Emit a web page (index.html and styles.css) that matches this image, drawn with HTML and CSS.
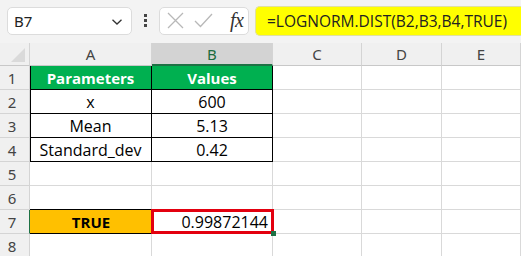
FILE: index.html
```html
<!DOCTYPE html>
<html>
<head>
<meta charset="utf-8">
<link rel="stylesheet" href="styles.css">
</head>
<body>
<div class="fbar">
  <div class="namebox">
    <span class="ref">B7</span>
    <svg class="chev" width="12" height="8" viewBox="0 0 12 8"><path d="M1.5 1.8 L6 6 L10.5 1.8" fill="none" stroke="#333" stroke-width="1.3"/></svg>
  </div>
  <div class="dots"><i></i><i></i><i></i></div>
  <div class="fxbox">
    <svg width="17" height="17" viewBox="0 0 17 17"><path d="M1 1 L16 16 M16 1 L1 16" stroke="#b8b8b8" stroke-width="1.3" fill="none"/></svg>
    <svg width="19" height="15" viewBox="0 0 19 15"><path d="M1 8 L6.5 13.5 L18 1" stroke="#b8b8b8" stroke-width="1.3" fill="none"/></svg>
    <span class="fx">fx</span>
  </div>
  <div class="formula">=LOGNORM.DIST(B2,B3,B4,TRUE)</div>
</div>
<div class="sheet">
  <div class="corner"><span class="tri"></span></div>
  <div class="ch">A</div>
  <div class="ch sel">B</div>
  <div class="ch">C</div>
  <div class="ch">D</div>
  <div class="ch">E</div>

  <div class="rh">1</div>
  <div class="c hd tl">Parameters</div>
  <div class="c hd tr">Values</div>
  <div class="c"></div><div class="c"></div><div class="c"></div>

  <div class="rh">2</div>
  <div class="c bl">x</div>
  <div class="c br">600</div>
  <div class="c"></div><div class="c"></div><div class="c"></div>

  <div class="rh">3</div>
  <div class="c bl">Mean</div>
  <div class="c br">5.13</div>
  <div class="c"></div><div class="c"></div><div class="c"></div>

  <div class="rh">4</div>
  <div class="c bl">Standard_dev</div>
  <div class="c br">0.42</div>
  <div class="c"></div><div class="c"></div><div class="c"></div>

  <div class="rh">5</div>
  <div class="c"></div><div class="c"></div><div class="c"></div><div class="c"></div><div class="c"></div>

  <div class="rh">6</div>
  <div class="c pre"></div><div class="c"></div><div class="c"></div><div class="c"></div><div class="c"></div>

  <div class="rh rsel">7</div>
  <div class="c orange">TRUE</div>
  <div class="c result">0.99872144<span class="fill"></span></div>
  <div class="c"></div><div class="c"></div><div class="c"></div>

  <div class="rh">8</div>
  <div class="c"></div><div class="c"></div><div class="c"></div><div class="c"></div><div class="c"></div>
</div>
</body>
</html>
```
FILE: styles.css
```css
* { box-sizing: border-box; }
html, body { margin: 0; padding: 0; }
body {
  width: 521px;
  height: 256px;
  overflow: hidden;
  background: #f3f3f3;
  font-family: "Open Sans", "Liberation Sans", sans-serif;
}
.fbar {
  height: 43px;
  display: flex;
  align-items: center;
  padding: 0 0 2px 7px;
  background: #f3f3f3;
}
.namebox {
  width: 125px;
  height: 28px;
  background: #fff;
  border: 1px solid #dcdcdc;
  border-radius: 5px;
  display: flex;
  align-items: center;
  justify-content: space-between;
  padding: 0 8px 0 6px;
  font-size: 15px;
  color: #222;
  font-family: "Noto Sans", sans-serif;
}
.chev { margin-top: 2px; }
.dots {
  width: 27px;
  display: flex;
  flex-direction: column;
  align-items: center;
  gap: 2px;
}
.dots i {
  display: block;
  width: 3px;
  height: 3px;
  background: #444;
}
.fxbox {
  width: 90px;
  height: 28px;
  background: #fff;
  border: 1px solid #dcdcdc;
  border-radius: 5px;
  display: flex;
  align-items: center;
  gap: 10px;
  padding: 0 0 0 7px;
}
.fx {
  font-family: "Liberation Serif", serif;
  font-style: italic;
  font-size: 20px;
  color: #333;
  margin-left: 7px;
  letter-spacing: -0.5px;
}
.formula {
  margin-left: 6px;
  flex: 1;
  height: 30px;
  background: #ffff00;
  border: 1px solid #e0e0a0;
  border-right: none;
  border-radius: 5px 0 0 5px;
  display: flex;
  align-items: center;
  padding-left: 11px;
  font-size: 15.5px;
  color: #222;
  white-space: nowrap;
}
.sheet {
  display: grid;
  grid-template-columns: 30px 122px 121px 89px 80px 1fr;
  grid-template-rows: 23px repeat(8, 24px);
  background: #fff;
  font-size: 16px;
  color: #000;
}
.corner {
  background: #f0f0f0;
  border-right: 1px solid #d4d4d4;
  border-bottom: 1px solid #c8c8c8;
  position: relative;
}
.tri {
  position: absolute;
  right: 4px;
  bottom: 3px;
  width: 0;
  height: 0;
  border-left: 14px solid transparent;
  border-bottom: 14px solid #dadada;
}
.ch {
  background: #f0f0f0;
  border-right: 1px solid #d4d4d4;
  border-bottom: 1px solid #c8c8c8;
  display: flex;
  align-items: center;
  justify-content: center;
  font-family: "Noto Sans", sans-serif;
  font-size: 15px;
  color: #444;
}
.ch.sel {
  background: #d3d3d3;
  color: #1d6b40;
  border-bottom: 2px solid #1e7145;
}
.rh {
  background: #f0f0f0;
  border-right: 1px solid #d4d4d4;
  border-bottom: 1px solid #d4d4d4;
  display: flex;
  align-items: center;
  justify-content: center;
  font-family: "Noto Sans", sans-serif;
  font-size: 15px;
  color: #444;
  padding-right: 5px;
}
.rh.rsel { border-right: 1px solid #1e7145; }
.c {
  border-right: 1px solid #d9d9d9;
  border-bottom: 1px solid #d9d9d9;
  display: flex;
  align-items: center;
  justify-content: center;
  white-space: nowrap;
}
.hd {
  background: #00b050;
  color: #fff;
  font-weight: 700;
  font-size: 15px;
  border-right: 1px solid #000;
  border-bottom: 1px solid #000;
}
.tl { box-shadow: inset 1px 0 0 #000; }
.bl {
  border-right: 1px solid #000;
  border-bottom: 1px solid #000;
  box-shadow: inset 1px 0 0 #000;
}
.br {
  border-right: 1px solid #000;
  border-bottom: 1px solid #000;
}
.pre { border-bottom: 1px solid #000; }
.orange {
  background: #ffc000;
  font-weight: 700;
  font-size: 15px;
  border-bottom: 1px solid #000;
  border-right: none;
}
.result {
  justify-content: flex-end;
  padding-right: 4px;
  position: relative;
}
.result::after {
  content: "";
  position: absolute;
  left: -1px;
  top: -1px;
  right: -2px;
  bottom: -1px;
  border: 3px solid #e3000f;
}
.fill {
  position: absolute;
  right: -4px;
  bottom: -3px;
  width: 5px;
  height: 5px;
  background: #1e7145;
  z-index: 2;
}
```
